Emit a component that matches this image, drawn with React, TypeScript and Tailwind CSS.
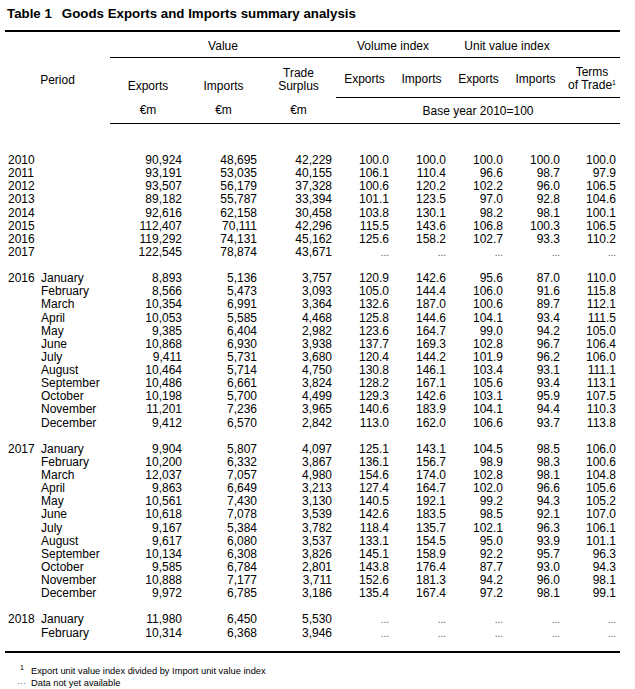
import React from "react";

type Row = { year?: string; month?: string; v: string[] };

const NA = ["...", "...", "...", "...", "..."];

const ANNUAL: Row[] = [
  { year: "2010", v: ["90,924", "48,695", "42,229", "100.0", "100.0", "100.0", "100.0", "100.0"] },
  { year: "2011", v: ["93,191", "53,035", "40,155", "106.1", "110.4", "96.6", "98.7", "97.9"] },
  { year: "2012", v: ["93,507", "56,179", "37,328", "100.6", "120.2", "102.2", "96.0", "106.5"] },
  { year: "2013", v: ["89,182", "55,787", "33,394", "101.1", "123.5", "97.0", "92.8", "104.6"] },
  { year: "2014", v: ["92,616", "62,158", "30,458", "103.8", "130.1", "98.2", "98.1", "100.1"] },
  { year: "2015", v: ["112,407", "70,111", "42,296", "115.5", "143.6", "106.8", "100.3", "106.5"] },
  { year: "2016", v: ["119,292", "74,131", "45,162", "125.6", "158.2", "102.7", "93.3", "110.2"] },
  { year: "2017", v: ["122,545", "78,874", "43,671", ...NA] },
];

const M2016: Row[] = [
  { year: "2016", month: "January", v: ["8,893", "5,136", "3,757", "120.9", "142.6", "95.6", "87.0", "110.0"] },
  { month: "February", v: ["8,566", "5,473", "3,093", "105.0", "144.4", "106.0", "91.6", "115.8"] },
  { month: "March", v: ["10,354", "6,991", "3,364", "132.6", "187.0", "100.6", "89.7", "112.1"] },
  { month: "April", v: ["10,053", "5,585", "4,468", "125.8", "144.6", "104.1", "93.4", "111.5"] },
  { month: "May", v: ["9,385", "6,404", "2,982", "123.6", "164.7", "99.0", "94.2", "105.0"] },
  { month: "June", v: ["10,868", "6,930", "3,938", "137.7", "169.3", "102.8", "96.7", "106.4"] },
  { month: "July", v: ["9,411", "5,731", "3,680", "120.4", "144.2", "101.9", "96.2", "106.0"] },
  { month: "August", v: ["10,464", "5,714", "4,750", "130.8", "146.1", "103.4", "93.1", "111.1"] },
  { month: "September", v: ["10,486", "6,661", "3,824", "128.2", "167.1", "105.6", "93.4", "113.1"] },
  { month: "October", v: ["10,198", "5,700", "4,499", "129.3", "142.6", "103.1", "95.9", "107.5"] },
  { month: "November", v: ["11,201", "7,236", "3,965", "140.6", "183.9", "104.1", "94.4", "110.3"] },
  { month: "December", v: ["9,412", "6,570", "2,842", "113.0", "162.0", "106.6", "93.7", "113.8"] },
];

const M2017: Row[] = [
  { year: "2017", month: "January", v: ["9,904", "5,807", "4,097", "125.1", "143.1", "104.5", "98.5", "106.0"] },
  { month: "February", v: ["10,200", "6,332", "3,867", "136.1", "156.7", "98.9", "98.3", "100.6"] },
  { month: "March", v: ["12,037", "7,057", "4,980", "154.6", "174.0", "102.8", "98.1", "104.8"] },
  { month: "April", v: ["9,863", "6,649", "3,213", "127.4", "164.7", "102.0", "96.6", "105.6"] },
  { month: "May", v: ["10,561", "7,430", "3,130", "140.5", "192.1", "99.2", "94.3", "105.2"] },
  { month: "June", v: ["10,618", "7,078", "3,539", "142.6", "183.5", "98.5", "92.1", "107.0"] },
  { month: "July", v: ["9,167", "5,384", "3,782", "118.4", "135.7", "102.1", "96.3", "106.1"] },
  { month: "August", v: ["9,617", "6,080", "3,537", "133.1", "154.5", "95.0", "93.9", "101.1"] },
  { month: "September", v: ["10,134", "6,308", "3,826", "145.1", "158.9", "92.2", "95.7", "96.3"] },
  { month: "October", v: ["9,585", "6,784", "2,801", "143.8", "176.4", "87.7", "93.0", "94.3"] },
  { month: "November", v: ["10,888", "7,177", "3,711", "152.6", "181.3", "94.2", "96.0", "98.1"] },
  { month: "December", v: ["9,972", "6,785", "3,186", "135.4", "167.4", "97.2", "98.1", "99.1"] },
];

const M2018: Row[] = [
  { year: "2018", month: "January", v: ["11,980", "6,450", "5,530", ...NA] },
  { month: "February", v: ["10,314", "6,368", "3,946", ...NA] },
];

const GRID = "grid grid-cols-[105px_76px_75px_75px_57px_57px_57px_57px_56px]";

function DataRow({ row }: { row: Row }) {
  return (
    <div className={`${GRID} h-[13.14px] leading-[13.14px]`}>
      <div className="flex">
        <span className="w-[36px] pl-[3px]">{row.year}</span>
        <span>{row.month}</span>
      </div>
      {row.v.map((val, i) => (
        <div key={i} className={`text-right pr-[4px] ${val === "..." ? "text-[10px] text-[#555]" : ""}`}>
          {val}
        </div>
      ))}
    </div>
  );
}

const Blank = () => <div className="h-[13.14px]" />;

export default function App() {
  return (
    <div className="bg-white w-[635px] h-[689px] text-black font-['Liberation_Sans',Arial,sans-serif]">
      <div className="pl-[7px] pt-[6px] h-[30px] text-[13.3px] font-bold leading-[16px] whitespace-nowrap">
        <span>Table 1</span>
        <span className="ml-[10px]">Goods Exports and Imports summary analysis</span>
      </div>

      <div className="ml-[5px] w-[615px] border-t-2 border-b-2 border-black text-[12px]">
        {/* header */}
        <div className="flex">
          <div className="w-[105px] flex items-center justify-center pt-[4px]">Period</div>
          <div className="flex-1 flex flex-col">
            {/* group titles */}
            <div className="flex h-[26px] border-b border-black items-end pb-[4px] leading-[13px]">
              <div className="w-[226px] text-center">Value</div>
              <div className="w-[114px] text-center">Volume index</div>
              <div className="w-[114px] text-center">Unit value index</div>
              <div className="w-[56px]" />
            </div>
            <div className="flex leading-[13px]">
              {/* value section */}
              <div className="w-[226px] flex flex-col">
                <div className="flex h-[39px] items-end pb-[4px]">
                  <div className="w-[76px] text-center">Exports</div>
                  <div className="w-[75px] text-center">Imports</div>
                  <div className="w-[75px] text-center">
                    Trade
                    <br />
                    Surplus
                  </div>
                </div>
                <div className="flex h-[26px] items-center pt-[1px]">
                  <div className="w-[76px] text-center">€m</div>
                  <div className="w-[75px] text-center">€m</div>
                  <div className="w-[75px] text-center">€m</div>
                </div>
              </div>
              {/* index section */}
              <div className="flex-1 flex flex-col">
                <div className="flex h-[40px] items-center border-b border-black pt-[3px]">
                  <div className="w-[57px] text-center">Exports</div>
                  <div className="w-[57px] text-center">Imports</div>
                  <div className="w-[57px] text-center">Exports</div>
                  <div className="w-[57px] text-center">Imports</div>
                  <div className="w-[56px] text-center whitespace-nowrap">
                    Terms
                    <br />
                    of Trade<span className="text-[7px] relative -top-[4px]">1</span>
                  </div>
                </div>
                <div className="h-[25px] flex items-center justify-center pt-[1px]">Base year 2010=100</div>
              </div>
            </div>
            <div className="border-b border-black" />
          </div>
        </div>

        {/* body */}
        <div className="pt-[30px] pb-[11px]">
          {ANNUAL.map((r) => (
            <DataRow key={r.year} row={r} />
          ))}
          <Blank />
          {M2016.map((r) => (
            <DataRow key={"16" + r.month} row={r} />
          ))}
          <Blank />
          {M2017.map((r) => (
            <DataRow key={"17" + r.month} row={r} />
          ))}
          <Blank />
          {M2018.map((r) => (
            <DataRow key={"18" + r.month} row={r} />
          ))}
        </div>
      </div>

      <div className="pt-[12px] text-[9.3px] leading-[12px]">
        <div className="flex">
          <span className="w-[31px] pl-[20px] text-[7px] relative -top-[3px]">1</span>
          <span>Export unit value index divided by Import unit value index</span>
        </div>
        <div className="flex">
          <span className="w-[31px] pl-[17px] text-[#666]">···</span>
          <span>Data not yet available</span>
        </div>
      </div>
    </div>
  );
}
